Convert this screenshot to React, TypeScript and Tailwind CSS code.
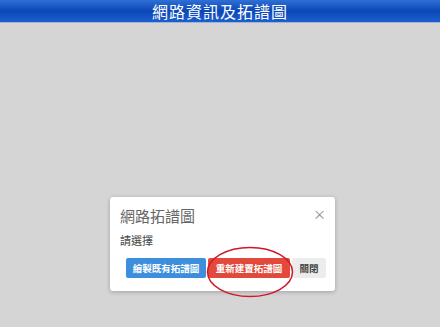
const CJK = '"Noto Sans CJK TC", "Noto Sans CJK SC", sans-serif';

export default function App() {
  return (
    <div className="flex h-[327px] w-[440px] flex-col bg-[#d5d5d5]" style={{ fontFamily: CJK }}>
      {/* header bar */}
      <div className="flex h-[23px] items-center justify-center border-b border-[#9fb4d6] bg-gradient-to-b from-[#2f6fd6] via-[#0b47b7] to-[#1d5fcf]">
        <span className="text-[16px] leading-none tracking-[1px] text-white">網路資訊及拓譜圖</span>
      </div>

      <div className="flex-1">
        <div className="relative ml-[110px] mt-[174px] h-[94px] w-[225px] rounded-[3px] bg-white pt-[9px] shadow-[0_1px_4px_rgba(0,0,0,0.25)]">
          <div className="flex items-start justify-between pl-[10px] pr-[9px]">
            <span className="text-[15px] leading-[20px] text-[#666]">網路拓譜圖</span>
            <span className="mt-[1px] text-[13px] leading-none text-[#888]">×</span>
          </div>
          <div className="mt-[7px] pl-[10px] text-[11px] leading-[14px] text-[#444]">請選擇</div>
          <div className="mt-[11px] flex gap-[2px] pl-[16px]">
            <button className="h-[20px] w-[80px] rounded-[2px] bg-[#3d8fdd] text-[9.5px] font-bold text-white">繪製既有拓譜圖</button>
            <button className="h-[20px] w-[82px] rounded-[2px] bg-[#e2493a] text-[9.5px] font-bold text-white">重新建置拓譜圖</button>
            <button className="h-[20px] w-[34px] rounded-[2px] bg-[#ececec] text-[9.5px] font-bold text-[#444]">關閉</button>
          </div>

          {/* red annotation ellipse */}
          <svg className="absolute left-[96px] top-[49px]" width="88" height="52" viewBox="0 0 88 52">
            <ellipse cx="44" cy="26" rx="42.5" ry="24.5" fill="none" stroke="#d1172a" strokeWidth="1.5" />
          </svg>
        </div>
      </div>
    </div>
  );
}
